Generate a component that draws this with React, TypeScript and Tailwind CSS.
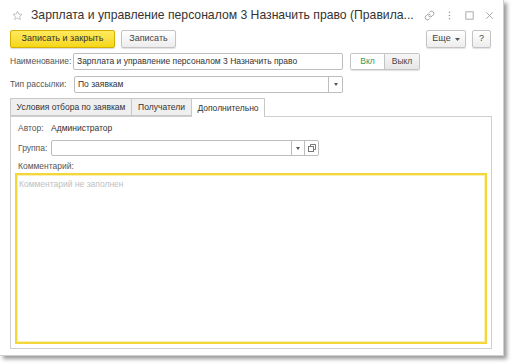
import React from "react";

const Tri = () => (
  <svg width="5" height="3" viewBox="0 0 5 3"><path d="M0 0h5L2.5 3z" fill="#555" /></svg>
);

export default function App() {
  return (
    <div className="w-[513px] h-[364px] bg-white font-['Liberation_Sans',Arial,sans-serif] text-[#333]">
      <div className="w-[504px] h-[356px] bg-white border-r border-b border-[#cfcfcf] shadow-[3px_3px_4px_rgba(0,0,0,0.4)] flex flex-col">
        {/* title */}
        <div className="h-[30px] flex items-center pl-[12px] pr-[8px] shrink-0">
          <svg width="11" height="11" viewBox="0 0 24 24" className="shrink-0">
            <path d="M12 2.5l2.9 6.3 6.9.7-5.2 4.6 1.5 6.8L12 17.4l-6.1 3.5 1.5-6.8-5.2-4.6 6.9-.7z" fill="none" stroke="#b0b0b0" strokeWidth="1.6" strokeLinejoin="round" />
          </svg>
          <div className="ml-[8px] text-[12.2px] text-[#333] whitespace-nowrap leading-none">
            Зарплата и управление персоналом 3 Назначить право (Правила...
          </div>
          <div className="flex-1" />
          <div className="flex items-center gap-[9px] shrink-0">
            <svg width="11" height="11" viewBox="0 0 24 24" fill="none" stroke="#9a9a9a" strokeWidth="2" strokeLinecap="round">
              <path d="M10 13a5 5 0 0 0 7.5.5l3-3a5 5 0 0 0-7-7l-1.7 1.7" />
              <path d="M14 11a5 5 0 0 0-7.5-.5l-3 3a5 5 0 0 0 7 7l1.7-1.7" />
            </svg>
            <svg width="11" height="11" viewBox="0 0 24 24" fill="#9a9a9a">
              <circle cx="12" cy="5" r="1.8" /><circle cx="12" cy="12" r="1.8" /><circle cx="12" cy="19" r="1.8" />
            </svg>
            <svg width="11" height="11" viewBox="0 0 24 24" fill="none" stroke="#9a9a9a" strokeWidth="1.8">
              <rect x="4" y="4" width="16" height="16" />
            </svg>
            <svg width="11" height="11" viewBox="0 0 24 24" fill="none" stroke="#9a9a9a" strokeWidth="1.8">
              <path d="M5 5l14 14M19 5L5 19" />
            </svg>
          </div>
        </div>

        {/* toolbar */}
        <div className="h-[18px] flex items-stretch px-[10px] gap-[6px] shrink-0 text-[9px]">
          <div className="w-[105px] flex items-center justify-center rounded-[2px] border border-[#d4b000] bg-gradient-to-b from-[#ffea5c] to-[#f5d60f] text-[#333] shadow-[0_1px_1px_rgba(0,0,0,0.15)]">
            Записать и закрыть
          </div>
          <div className="w-[55px] flex items-center justify-center rounded-[2px] border border-[#c4c4c4] bg-gradient-to-b from-white to-[#ededed] text-[#444] shadow-[0_1px_1px_rgba(0,0,0,0.12)]">
            Записать
          </div>
          <div className="flex-1" />
          <div className="w-[40px] flex items-center justify-center gap-[4px] rounded-[2px] border border-[#c4c4c4] bg-gradient-to-b from-white to-[#ededed] text-[#444] shadow-[0_1px_1px_rgba(0,0,0,0.12)]">
            Еще <Tri />
          </div>
          <div className="w-[19px] flex items-center justify-center rounded-[2px] border border-[#c4c4c4] bg-gradient-to-b from-white to-[#ededed] text-[#444] shadow-[0_1px_1px_rgba(0,0,0,0.12)] mr-[2px]">
            ?
          </div>
        </div>

        {/* Наименование */}
        <div className="mt-[5px] h-[17px] flex items-stretch pl-[10px] text-[8.5px] shrink-0">
          <div className="w-[63px] flex items-center text-[#555]">Наименование:</div>
          <div className="w-[270px] flex items-center px-[3px] border border-[#bdbdbd] rounded-[2px] bg-white text-[#333]">
            Зарплата и управление персоналом 3 Назначить право
          </div>
          <div className="ml-[7px] flex rounded-[2px] border border-[#c4c4c4] shadow-[0_1px_1px_rgba(0,0,0,0.12)] overflow-hidden">
            <div className="w-[33px] flex items-center justify-center bg-white text-[#2e9a5e]">Вкл</div>
            <div className="w-[35px] flex items-center justify-center border-l border-[#c4c4c4] bg-gradient-to-b from-[#f7f7f7] to-[#e6e6e6] text-[#444]">Выкл</div>
          </div>
        </div>

        {/* Тип рассылки */}
        <div className="mt-[6px] h-[17px] flex items-stretch pl-[10px] text-[8.5px] shrink-0">
          <div className="w-[64px] flex items-center text-[#555]">Тип рассылки:</div>
          <div className="w-[269px] flex items-stretch border border-[#bdbdbd] rounded-[2px] bg-white">
            <div className="flex-1 flex items-center px-[3px] text-[#333]">По заявкам</div>
            <div className="w-[14px] border-l border-[#bdbdbd] flex items-center justify-center">
              <svg width="4" height="3" viewBox="0 0 4 3"><path d="M0 0h4L2 3z" fill="#555" /></svg>
            </div>
          </div>
        </div>

        {/* tabs */}
        <div className="mt-[5px] mx-[10px] flex items-end h-[18px] text-[8.5px] shrink-0 relative z-10">
          <div className="w-[122px] h-[18px] flex items-center justify-center border border-[#c8c8c8] bg-[#efefef] text-[#333]">Условия отбора по заявкам</div>
          <div className="w-[60px] h-[18px] flex items-center justify-center border border-l-0 border-[#c8c8c8] bg-[#efefef] text-[#333]">Получатели</div>
          <div className="w-[73px] h-[19px] -mb-px flex items-center justify-center border border-b-0 border-l-0 border-[#c8c8c8] bg-white text-[#333]">Дополнительно</div>
        </div>
        <div className="mx-[10px] w-[482px] h-[233px] border border-[#cfcfcf] flex flex-col text-[8.5px] shrink-0">
          <div className="mt-[5px] h-[12px] flex items-center pl-[7px]">
            <span className="text-[#555] w-[33px]">Автор:</span>
            <span className="text-[#333]">Администратор</span>
          </div>
          <div className="mt-[6px] h-[16px] flex items-stretch pl-[7px]">
            <div className="w-[33px] flex items-center text-[#555]">Группа:</div>
            <div className="w-[268px] flex items-stretch border border-[#bdbdbd] rounded-[2px] bg-white">
              <div className="flex-1" />
              <div className="w-[13px] border-l border-[#bdbdbd] flex items-center justify-center">
                <svg width="4" height="3" viewBox="0 0 4 3"><path d="M0 0h4L2 3z" fill="#555" /></svg>
              </div>
              <div className="w-[14px] border-l border-[#bdbdbd] flex items-center justify-center">
                <svg width="8" height="8" viewBox="0 0 8 8" fill="none" stroke="#777" strokeWidth="1">
                  <rect x="0.5" y="2.5" width="5" height="5" />
                  <path d="M2.5 2.5V0.5h5v5h-2" />
                </svg>
              </div>
            </div>
          </div>
          <div className="mt-[4px] h-[12px] flex items-center pl-[7px] text-[#555]">Комментарий:</div>
          <div className="mt-[1px] mx-[4px] h-[171px] border-2 border-[#f3d63a] shadow-[inset_0_0_0_1px_#fbf0b4] px-[2px] pt-[3px] text-[#c0c0c0]">
            Комментарий не заполнен
          </div>
        </div>
      </div>
    </div>
  );
}
